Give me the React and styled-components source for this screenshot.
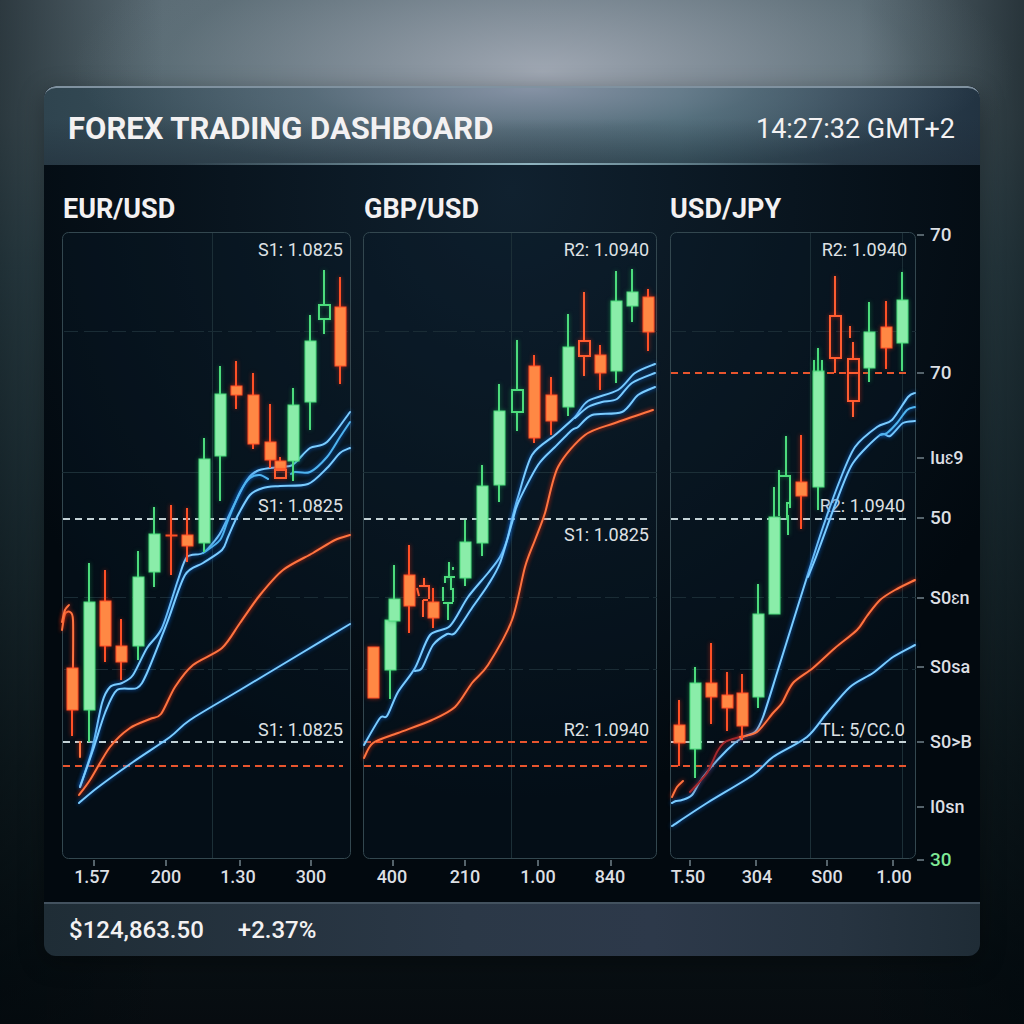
import React from 'react'
import styled, { createGlobalStyle } from 'styled-components'

const GlobalStyle = createGlobalStyle`
    * {
        box-sizing: border-box;
    }
    body {
        margin: 0;
        background: #070d11;
        color: #f3f1f2;
        font-family: Roboto, "Liberation Sans", sans-serif;
    }
    h1, h2, p {
        margin: 0;
    }
`

// candle: [x, high, top, bottom, low, kind]
// kinds: up / down are filled, upHollow / downHollow are outlines
const eurusd = {
    pair: 'EUR/USD',
    frame: { x: 62, width: 289 },
    viewBox: '62 230 289 662',
    columns: [212],
    levels: [
        { y: 519, color: 'white' },
        { y: 742, color: 'white' },
        { y: 766, color: 'orange' },
    ],
    labels: [
        { x: 343, y: 256, text: 'S1: 1.0825' },
        { x: 343, y: 512, text: 'S1: 1.0825' },
        { x: 343, y: 736, text: 'S1: 1.0825' },
    ],
    ticks: [[94, '1.57', 92], [166, '200'], [240, '1.30', 238], [311, '300']],
    candles: [
        [72, 668, 668, 710, 736, 'down'],
        [89, 563, 602, 710, 742, 'up'],
        [105, 570, 601, 646, 662, 'down'],
        [121, 619, 646, 662, 680, 'down'],
        [138, 551, 577, 646, 660, 'up'],
        [154, 507, 534, 572, 587, 'up'],
        [171, 505, 535, 536, 575, 'down'],
        [187, 508, 535, 546, 562, 'down'],
        [204, 438, 459, 543, 552, 'up'],
        [220, 366, 394, 456, 501, 'up'],
        [236, 361, 386, 395, 409, 'down'],
        [253, 373, 395, 444, 449, 'down'],
        [270, 404, 442, 460, 468, 'down'],
        [280, 457, 461, 469, 470, 'down'],
        [280, 469, 470, 478, 478, 'downHollow'],
        [293, 388, 405, 461, 481, 'up'],
        [310, 315, 341, 402, 430, 'up'],
        [324, 270, 305, 319, 334, 'upHollow'],
        [340, 277, 307, 366, 384, 'down'],
    ],
    lines: [
        ['blue', [80, 787, 92, 750, 102, 703, 110, 687, 122, 683, 133, 675, 147, 648, 162, 628, 178, 580, 187, 557, 203, 553, 217, 538, 222, 530, 235, 503, 247, 480, 257, 471, 270, 468, 290, 466, 297, 461, 310, 448, 327, 442, 350, 412]],
        ['blue', [80, 787, 93, 750, 105, 713, 117, 690, 137, 688, 147, 673, 167, 623, 185, 575, 203, 563, 222, 550, 228, 537, 237, 517, 250, 495, 263, 488, 280, 486, 308, 484, 327, 468, 340, 453, 350, 448]],
        ['thin', [203, 553, 220, 540, 228, 520, 240, 492, 250, 478, 260, 475, 268, 479]],
        ['thin', [291, 474, 295, 472, 310, 472, 327, 457, 340, 437, 350, 422]],
        ['orange', [79, 795, 90, 780, 110, 747, 130, 728, 150, 719, 161, 714, 175, 687, 193, 665, 222, 648, 240, 623, 260, 595, 283, 570, 313, 553, 335, 540, 350, 535]],
        ['blue', [79, 803, 97, 788, 133, 762, 170, 737, 190, 720, 240, 690, 300, 654, 350, 624]],
        ['orange', [62, 630, 65, 614, 70, 612, 73, 620, 73, 668]],
        ['orange', [62, 622, 65, 610, 69, 605]],
        ['orange', [80, 742, 80, 757]],
    ],
}

const gbpusd = {
    pair: 'GBP/USD',
    frame: { x: 363, width: 294 },
    viewBox: '363 230 294 662',
    columns: [511],
    levels: [
        { y: 519, color: 'white' },
        { y: 742, color: 'orange' },
        { y: 766, color: 'orange' },
    ],
    labels: [
        { x: 649, y: 256, text: 'R2: 1.0940' },
        { x: 649, y: 541, text: 'S1: 1.0825' },
        { x: 649, y: 736, text: 'R2: 1.0940' },
    ],
    ticks: [[393, '400', 392], [465, '210'], [538, '1.00'], [611, '840', 610]],
    candles: [
        [373, 647, 647, 698, 698, 'down'],
        [390, 620, 620, 670, 699, 'up'],
        [394, 565, 599, 621, 621, 'up'],
        [409, 545, 575, 606, 633, 'down'],
        [433, 588, 602, 618, 628, 'down'],
        [465, 520, 542, 578, 586, 'up'],
        [482, 465, 486, 543, 556, 'up'],
        [499, 384, 411, 485, 502, 'up'],
        [517, 340, 390, 412, 431, 'upHollow'],
        [534, 355, 366, 438, 443, 'down'],
        [551, 377, 395, 421, 435, 'down'],
        [568, 314, 347, 407, 416, 'up'],
        [584, 292, 341, 356, 376, 'downHollow'],
        [600, 345, 355, 373, 390, 'down'],
        [616, 271, 301, 371, 383, 'up'],
        [632, 269, 292, 306, 322, 'up'],
        [648, 289, 297, 332, 351, 'down'],
    ],
    // half-open candles
    strokes: [
        ['down', 'M424 578V587M417 588l2 8M419 586h10V599M423 600V617M423 600h5'],
        ['up', 'M449 562V577M444 577h11M445 577V583M451 577V590M443 587V601M453 588V602M443 603h10M448 603V620M453 567v3'],
    ],
    lines: [
        ['blue', [364, 745, 380, 718, 387, 716, 398, 692, 415, 668, 430, 635, 450, 626, 468, 597, 488, 573, 500, 557, 507, 540, 512, 519, 518, 497, 532, 455, 555, 435, 575, 417, 588, 401, 618, 390, 635, 373, 655, 364]],
        ['blue', [415, 671, 422, 668, 433, 645, 447, 634, 455, 633, 472, 608, 488, 585, 500, 563, 512, 523, 518, 503, 538, 465, 555, 447, 572, 430, 578, 427, 592, 415, 622, 412, 638, 395, 655, 387]],
        ['blue', [575, 418, 588, 407, 602, 402, 617, 399, 632, 383, 655, 373]],
        ['orange', [364, 758, 373, 743, 398, 733, 432, 720, 455, 707, 472, 683, 488, 665, 512, 620, 525, 567, 535, 540, 545, 513, 558, 467, 585, 435, 615, 423, 653, 410]],
    ],
}

const usdjpy = {
    pair: 'USD/JPY',
    frame: { x: 670, width: 246 },
    viewBox: '669 230 311 662',
    columns: [810, 902],
    levels: [
        { y: 373, color: 'orange' },
        { y: 519, color: 'white' },
        { y: 742, color: 'white' },
        { y: 766, color: 'orange' },
    ],
    labels: [
        { x: 907, y: 256, text: 'R2: 1.0940' },
        { x: 905, y: 512, text: 'R2: 1.0940' },
        { x: 905, y: 736, text: 'TL: 5/CC.0' },
    ],
    ticks: [[690, 'T.50', 688], [756, '304', 757], [827, 'S00'], [893, '1.00', 894]],
    scale: [
        { y: 234, text: '70' },
        { y: 372, text: '70' },
        { y: 457, text: 'Iuɛ9', small: true },
        { y: 517, text: '50' },
        { y: 597, text: 'S0ɛn', small: true },
        { y: 666, text: 'S0sa', small: true },
        { y: 741, text: 'S0>B', small: true },
        { y: 806, text: 'I0sn', small: true },
        { y: 859, text: '30', green: true },
    ],
    candles: [
        [679, 700, 725, 743, 766, 'down'],
        [695, 667, 683, 749, 778, 'up'],
        [711, 643, 683, 697, 724, 'down'],
        [727, 672, 695, 708, 731, 'down'],
        [742, 674, 693, 726, 740, 'down'],
        [758, 584, 614, 697, 708, 'up'],
        [774, 487, 517, 614, 614, 'up'],
        [801, 435, 482, 496, 529, 'down'],
        [818, 348, 371, 487, 510, 'up'],
        [835, 276, 316, 358, 373, 'downHollow'],
        [853, 342, 359, 401, 417, 'downHollow'],
        [869, 302, 332, 368, 382, 'up'],
        [886, 301, 327, 348, 369, 'down'],
        [902, 272, 300, 343, 371, 'up'],
    ],
    strokes: [
        ['up', 'M779 516V470M779 476H790V508M786 436V476M786 503H789M787 503V520M788 515V535M814 360V371M822 360V371'],
        ['down', 'M850 326V338M848 373H858'],
    ],
    lines: [
        ['blue', [672, 803, 676, 801, 682, 800, 692, 795, 703, 777, 727, 750, 743, 737, 755, 732, 763, 717, 777, 673, 792, 625, 807, 577, 823, 527, 840, 480, 855, 447, 877, 427, 892, 420, 908, 397, 915, 393]],
        ['blue', [808, 577, 816, 557, 827, 527, 837, 500, 853, 463, 880, 435, 890, 436, 903, 423, 915, 421]],
        ['thin', [880, 435, 887, 433, 897, 423, 907, 410, 915, 407]],
        ['red', [690, 792, 707, 773, 717, 752, 725, 742, 740, 737]],
        ['orange', [740, 737, 757, 732, 773, 713, 782, 703, 793, 683, 813, 668, 835, 648, 857, 630, 867, 616, 880, 600, 895, 590, 915, 580]],
        ['orange', [672, 797, 677, 787, 683, 781]],
        ['blue', [672, 826, 707, 803, 753, 775, 773, 757, 807, 737, 827, 713, 850, 687, 873, 673, 893, 657, 915, 645]],
    ],
}

const charts = [eurusd, gbpusd, usdjpy]

// flat list of x, y pairs to a smooth path
function toPath(flat) {
    const pts = []
    for (let i = 0; i < flat.length; i += 2) pts.push([flat[i], flat[i + 1]])
    let d = `M${pts[0]}`
    for (let i = 0; i < pts.length - 1; i++) {
        const a = pts[i - 1] || pts[i]
        const b = pts[i]
        const c = pts[i + 1]
        const e = pts[i + 2] || c
        d += `C${b[0] + (c[0] - a[0]) / 7},${b[1] + (c[1] - a[1]) / 7} ${c[0] - (e[0] - b[0]) / 7},${c[1] - (e[1] - b[1]) / 7} ${c}`
    }
    return d
}

function CandleStick({ candle }) {
    const [x, high, top, bottom, low, kind] = candle
    return (
        <Candle $kind={kind}>
            <path d={`M${x} ${high}V${top}M${x} ${bottom}V${low}`} />
            <rect x={x - 5} y={top} width="11" height={bottom - top} />
        </Candle>
    )
}

function Chart({ chart }) {
    const { frame } = chart
    const left = frame.x
    const right = frame.x + frame.width
    return (
        <ChartSvg viewBox={chart.viewBox} role="img" aria-label={`${chart.pair} chart`}>
            <Frame x={left + 0.5} y="232.5" width={frame.width - 1} height="626" rx="6" />
            <Grid>
                {chart.columns.map((x) => <path key={x} d={`M${x + 0.5} 233V858`} />)}
                <path d={`M${left} 472.5H${right}`} />
            </Grid>
            <Grid $dashed>
                {[331, 597, 669].map((y) => <path key={y} d={`M${left + 2} ${y + 0.5}H${right}`} />)}
            </Grid>
            {chart.levels.map((l) => (
                <Level key={l.y} $color={l.color} d={`M${left + 1} ${l.y}H${right - 8}`} />
            ))}
            {chart.labels.map((l) => <LevelText key={l.y} x={l.x} y={l.y}>{l.text}</LevelText>)}
            {chart.lines.map(([color, pts], i) => <Average key={i} $color={color} d={toPath(pts)} />)}
            {chart.candles.map((c, i) => <CandleStick key={i} candle={c} />)}
            {(chart.strokes || []).map(([kind, d]) => (
                <Candle key={d} $kind={kind + 'Hollow'}><path d={d} /></Candle>
            ))}
            {chart.ticks.map(([x, text, textX]) => (
                <g key={x}>
                    <Tick d={`M${x} 860V866`} />
                    <TickText x={textX || x} y="883">{text}</TickText>
                </g>
            ))}
            {(chart.scale || []).map((s) => (
                <g key={s.y}>
                    <Tick d={`M${right + 1} ${s.y + 1}H${right + 8}`} />
                    <ScaleText x="930" y={s.y + 7} $small={s.small} $green={s.green}>{s.text}</ScaleText>
                </g>
            ))}
        </ChartSvg>
    )
}

export default function App() {
    return (
        <Page>
            <GlobalStyle />
            <Dashboard>
                <Header>
                    <Title>FOREX TRADING DASHBOARD</Title>
                    <Clock>14:27:32 GMT+2</Clock>
                </Header>
                <Charts>
                    {charts.map((chart) => (
                        <section key={chart.pair}>
                            <Pair>{chart.pair}</Pair>
                            <Chart chart={chart} />
                        </section>
                    ))}
                </Charts>
                <Footer>
                    <p>$124,863.50</p>
                    <p>+2.37%</p>
                </Footer>
            </Dashboard>
        </Page>
    )
}

const Page = styled.div`
    min-height: 100vh;
    padding: 86px 44px 67px;
    background:
        radial-gradient(ellipse 46% 16% at 53% 7%, rgba(172, 178, 190, 0.85), rgba(150, 160, 172, 0.55) 45%, rgba(120, 136, 146, 0.15) 80%, transparent),
        linear-gradient(90deg, rgba(0, 8, 12, 0.5), transparent 16%, transparent 84%, rgba(0, 8, 12, 0.55)),
        linear-gradient(#5a6b74, #566971 12%, #3f575f 26%, #2b4047 48%, #142024 75%, #080f13 94%, #070c10);
`

const Dashboard = styled.main`
    border-radius: 12px;
    overflow: hidden;
    background:
        radial-gradient(ellipse 60% 70% at 50% 12%, #10212f, transparent),
        #02090f;
    box-shadow: 0 6px 24px rgba(0, 0, 0, 0.35);
`

const Header = styled.header`
    display: flex;
    justify-content: space-between;
    align-items: center;
    height: 79px;
    padding: 4px 25px 0 24px;
    border-top: 2px solid #8092a0;
    border-radius: 12px 12px 0 0;
    background:
        linear-gradient(90deg, transparent 15%, #8fb3bf 52%, transparent 85%) bottom / 100% 2px no-repeat,
        linear-gradient(transparent 40%, rgba(30, 42, 54, 0.45)),
        radial-gradient(ellipse 48% 110% at 52% 0, rgba(145, 155, 175, 0.85), rgba(120, 138, 155, 0.4) 50%, transparent),
        linear-gradient(90deg, #2f444f, #4a616c 45%, #40606b 68%, #2f4452 85%, #223342);
`

const Title = styled.h1`
    font-size: 31px;
    font-weight: 700;
    line-height: 36px;
`

const Clock = styled.time`
    font-size: 27px;
    line-height: 36px;
`

const Charts = styled.div`
    display: grid;
    grid-template-columns: minmax(0, 289fr) minmax(0, 294fr) minmax(0, 311fr);
    gap: 12px;
    padding: 28px 0 10px 18px;
`

const Pair = styled.h2`
    margin: 0 0 5px 1px;
    font-size: 27px;
    font-weight: 700;
    line-height: 32px;
`

const Footer = styled.footer`
    display: flex;
    align-items: center;
    gap: 34px;
    height: 54px;
    padding: 0 25px;
    border-top: 2px solid #43525f;
    background: linear-gradient(90deg, #1f2d36, #2b3847 45%, #2d394a 65%, #273441 85%, #1f2c36);
    font-size: 24px;
    font-weight: 500;
    line-height: 32px;
`

const ChartSvg = styled.svg`
    display: block;
    width: 100%;
    height: auto;
    overflow: visible;
    font-family: inherit;
`

const Frame = styled.rect`
    fill: rgba(10, 26, 40, 0.35);
    stroke: #33474f;
`

const Grid = styled.g`
    fill: none;
    stroke: ${(p) => (p.$dashed ? '#1a2c35' : '#1c2f37')};
    stroke-dasharray: ${(p) => (p.$dashed ? '14 6 24 4' : 'none')};
`

const levelColors = { white: '#c4d2d6', orange: '#e8552e' }

const Level = styled.path`
    stroke: ${(p) => levelColors[p.$color]};
    stroke-width: 2;
    stroke-dasharray: 7 5;
`

const candleColors = {
    up: { fill: '#8aeda9', stroke: '#4cdb7c' },
    down: { fill: '#ff8844', stroke: '#ff5026' },
    upHollow: { fill: 'none', stroke: '#4cdb7c' },
    downHollow: { fill: 'none', stroke: '#ff5c30' },
}

const Candle = styled.g`
    fill: ${(p) => candleColors[p.$kind].fill};
    stroke: ${(p) => candleColors[p.$kind].stroke};
    stroke-width: 2;
    filter: drop-shadow(0 0 2px ${(p) => (p.$kind.startsWith('up') ? 'rgba(20, 170, 80, 0.6)' : 'rgba(255, 40, 10, 0.6)')});
    path {
        fill: none;
    }
    rect {
        stroke-width: ${(p) => (p.$kind.endsWith('Hollow') ? 2 : 1)};
    }
`

const lineColors = {
    blue: ['#7accff', '#0a64d0'],
    thin: ['#4fb4ef', '#0a64d0'],
    orange: ['#ff7440', '#e02808'],
    red: ['#a3272c', '#801010'],
}

const Average = styled.path`
    fill: none;
    stroke: ${(p) => lineColors[p.$color][0]};
    stroke-width: 2;
    stroke-linecap: round;
    filter: drop-shadow(0 0 2px ${(p) => lineColors[p.$color][1]});
`

const LevelText = styled.text`
    fill: #dfe1e4;
    font-size: 18px;
    text-anchor: end;
`

const Tick = styled.path`
    stroke: #55636b;
    stroke-width: 2;
`

const TickText = styled.text`
    fill: #dcdfe3;
    font-size: 18px;
    font-weight: 500;
    text-anchor: middle;
`

const ScaleText = styled.text`
    fill: ${(p) => (p.$green ? '#7fe896' : '#dcdfe3')};
    font-size: ${(p) => (p.$small ? '18px' : '19px')};
    font-weight: 500;
`
